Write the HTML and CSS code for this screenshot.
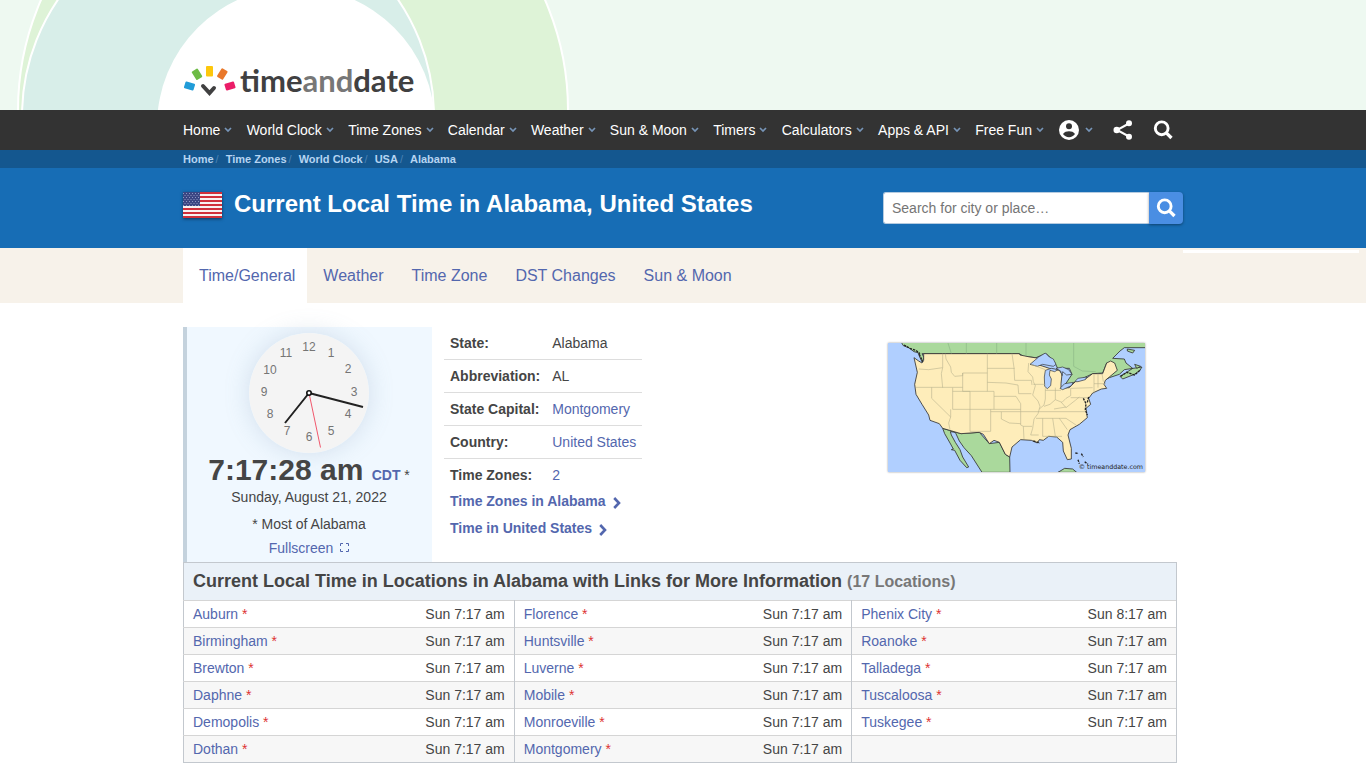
FILE: index.html
```html
<!DOCTYPE html>
<html lang="en">
<head>
<meta charset="utf-8">
<meta name="viewport" content="width=device-width, initial-scale=1">
<title>Current Local Time in Alabama, United States</title>
<link rel="stylesheet" href="styles.css">
</head>
<body>
<svg width="0" height="0" class="defs" aria-hidden="true">
  <symbol id="chev" viewBox="0 0 8 6"><path d="M1 1l3 3 3-3" fill="none" stroke="currentColor" stroke-width="1.7"/></symbol>
  <symbol id="search" viewBox="0 0 20 20"><circle cx="8.700" cy="8.300" r="6.400" fill="none" stroke="currentColor" stroke-width="2.900"/><path d="M12.800 12.400l5.700 5.600" fill="none" stroke="currentColor" stroke-width="3.300"/></symbol>
  <symbol id="arrow" viewBox="0 0 8 12"><path d="M1.2 1l4.800 5-4.800 5" fill="none" stroke="currentColor" stroke-width="2.600"/></symbol>
</svg>

<header class="banner">
  <svg class="banner-art" width="600" height="110" viewBox="0 0 600 110" aria-hidden="true">
    <circle cx="293" cy="110" r="275" fill="#def3d7" stroke="#fff" stroke-width="2"/>
    <circle cx="228" cy="116" r="206" fill="#d8eee9" stroke="#fff" stroke-width="2"/>
    <circle cx="296" cy="126" r="139" fill="#fff"/>
  </svg>
  <div class="wrap">
    <a class="logo" href="#" aria-label="timeanddate">
      <svg width="54" height="34" viewBox="0 0 54 34" aria-hidden="true">
        <rect x="-5" y="-3.500" width="10" height="7" rx="1" fill="#219cd8" transform="translate(6.500 20) rotate(17)"/>
        <rect x="-3.500" y="-5" width="7" height="10" rx="1" fill="#6dbb45" transform="translate(14 8.300) rotate(-32)"/>
        <rect x="23" y="0" width="7" height="10.500" rx="1" fill="#fdc70c"/>
        <rect x="-3.500" y="-5" width="7" height="10" rx="1" fill="#e9782a" transform="translate(39.300 8) rotate(32)"/>
        <rect x="-5" y="-3.500" width="10" height="7" rx="1" fill="#eb1d68" transform="translate(47 20) rotate(-17)"/>
        <path d="M20 20l6.500 7 4.500-5" fill="none" stroke="#404041" stroke-width="4" stroke-linecap="round"/>
      </svg>
      <span class="logo-text">time<span>and</span>date</span>
    </a>
  </div>
</header>

<nav class="nav" aria-label="Main">
  <div class="wrap nav-row">
    <a href="#">Home<svg><use href="#chev"/></svg></a>
    <a href="#">World Clock<svg><use href="#chev"/></svg></a>
    <a href="#">Time Zones<svg><use href="#chev"/></svg></a>
    <a href="#">Calendar<svg><use href="#chev"/></svg></a>
    <a href="#">Weather<svg><use href="#chev"/></svg></a>
    <a href="#">Sun &amp; Moon<svg><use href="#chev"/></svg></a>
    <a href="#">Timers<svg><use href="#chev"/></svg></a>
    <a href="#">Calculators<svg><use href="#chev"/></svg></a>
    <a href="#">Apps &amp; API<svg><use href="#chev"/></svg></a>
    <a href="#">Free Fun<svg><use href="#chev"/></svg></a>
    <button type="button" class="nav-btn account" aria-label="My account">
      <svg class="ico" viewBox="0 0 20 20"><circle cx="10" cy="10" r="10" fill="#fff"/><circle cx="10" cy="6.200" r="3" fill="#333"/><path d="M4 14.100c1.300-2.200 3.700-2.900 6-2.900s4.700.7 6 2.900c-1.300 1.900-3.500 3.200-6 3.200s-4.700-1.300-6-3.200z" fill="#333"/></svg>
      <svg class="chev"><use href="#chev"/></svg>
    </button>
    <button type="button" class="nav-btn share" aria-label="Share">
      <svg class="ico" viewBox="0 0 20 20"><path d="M16 3.500L4 10l12 6.500" fill="none" stroke="#fff" stroke-width="2"/><circle cx="16" cy="3.200" r="3" fill="#fff"/><circle cx="3.700" cy="10" r="3.200" fill="#fff"/><circle cx="16" cy="16.800" r="3" fill="#fff"/></svg>
    </button>
    <button type="button" class="nav-btn" aria-label="Search"><svg class="ico"><use href="#search"/></svg></button>
  </div>
</nav>

<nav class="crumbs" aria-label="Breadcrumb">
  <ol class="wrap">
    <li><a href="#">Home</a></li>
    <li><a href="#">Time Zones</a></li>
    <li><a href="#">World Clock</a></li>
    <li><a href="#">USA</a></li>
    <li><a href="#">Alabama</a></li>
  </ol>
</nav>

<section class="hero">
  <div class="wrap hero-row">
    <svg class="flag" viewBox="0 0 39 26" role="img" aria-label="United States flag">
      <defs><pattern id="stars" width="3" height="4" patternUnits="userSpaceOnUse"><rect width="3" height="4" fill="#3b4683"/><rect x="0" y="1" width="1" height="1" fill="#8d96c0"/><rect x="1.500" y="3" width="1" height="1" fill="#8d96c0"/></pattern></defs>
      <rect width="39" height="26" fill="#f7f1f1"/>
      <path d="M0 1h39M0 5h39M0 9h39M0 13h39M0 17h39M0 21h39M0 25h39" stroke="#cf2f3a" stroke-width="2"/>
      <rect width="17" height="14" fill="url(#stars)"/>
    </svg>
    <h1>Current Local Time in Alabama, United States</h1>
    <form class="search" role="search">
      <input type="text" aria-label="Search for city or place" placeholder="Search for city or place…">
      <button type="button" aria-label="Search"><svg><use href="#search"/></svg></button>
    </form>
  </div>
</section>

<nav class="tabs" aria-label="Sections">
  <div class="tab-row">
    <a class="on" href="#">Time/General</a>
    <a href="#">Weather</a>
    <a href="#">Time Zone</a>
    <a href="#">DST Changes</a>
    <a href="#">Sun &amp; Moon</a>
  </div>
  <div class="side"></div>
</nav>

<main class="wrap">
  <div class="overview">
    <section class="panel">
      <svg class="clock" viewBox="0 0 120 120" role="img" aria-label="Clock">
        <circle cx="60" cy="60" r="60" fill="#f4f4f4"/>
        <g class="nums">
          <text x="60" y="18">12</text><text x="82" y="24">1</text><text x="99" y="40">2</text><text x="105" y="63">3</text>
          <text x="99" y="85">4</text><text x="82" y="102">5</text><text x="60" y="108">6</text><text x="38" y="102">7</text>
          <text x="21" y="85">8</text><text x="15" y="63">9</text><text x="21" y="41">10</text><text x="37" y="24">11</text>
        </g>
        <path d="M60 60L36 90M60 60l54 14" stroke="#222" stroke-width="2"/>
        <path d="M60 60l11.500 54.500" stroke="#f0576c" stroke-width="1"/>
        <circle cx="60" cy="60" r="2.200" fill="#fff" stroke="#111" stroke-width="1.600"/>
      </svg>
      <div class="time">7:17:28 am <span class="zone"><a href="#">CDT</a> *</span></div>
      <div class="line">Sunday, August 21, 2022</div>
      <div class="line most">* Most of Alabama</div>
      <div class="line full"><a href="#">Fullscreen <svg viewBox="0 0 9 9"><path d="M.5 3V.5H3M6 .5h2.500V3M8.500 6v2.500H6M3 8.500H.5V6" fill="none" stroke="currentColor"/></svg></a></div>
    </section>

    <section class="facts">
      <table>
        <tr><th scope="row">State:</th><td>Alabama</td></tr>
        <tr><th scope="row">Abbreviation:</th><td>AL</td></tr>
        <tr><th scope="row">State Capital:</th><td><a href="#">Montgomery</a></td></tr>
        <tr><th scope="row">Country:</th><td><a href="#">United States</a></td></tr>
        <tr><th scope="row">Time Zones:</th><td><a href="#">2</a></td></tr>
      </table>
      <a class="more" href="#">Time Zones in Alabama<svg><use href="#arrow"/></svg></a>
      <a class="more" href="#">Time in United States<svg><use href="#arrow"/></svg></a>
    </section>

    <a class="map" href="#">
      <svg viewBox="26 24 771 387" role="img" aria-label="Map of United States">
        <rect x="26" y="24" width="771" height="387" fill="#b0cfff"/>
        <g stroke="#333" stroke-width="2.500" stroke-linejoin="round">
          <path d="M66 22L72 32 88 38 104 50 116 53 121 66 128 80 134 68 128 56H420L432 64 470 68 500 55 525 80 535 100H570L578 118 550 160 590 140 640 116 670 114 682 84 712 106 684 125 670 138 690 128 720 118 735 104 788 96 780 108 765 118 730 132 722 124 742 112 760 100 740 84 735 72 700 70 722 48 735 38H800V20z" fill="#aad99c"/>
          <path d="M744 42l22 4-6 8-16-6zM766 88l18 6-12 6z" fill="#aad99c"/>
          <path d="M190 280L196 296 212 324 222 342 216 344 226 346 242 376 262 398 268 396 250 366 242 344 228 322 216 300 213 290 228 292 240 318 254 338 276 362 308 412H392L391 366 378 358 360 322 330 326 300 292 245 296z" fill="#aad99c"/>
          <path d="M104 68L118 78 128 84 133 76V56H420L422 60 452 66 480 70 456 86 480 90 510 100 540 106 548 118 545 146 545 160 570 158 590 138 618 132 640 116 670 116 682 84 694 78 706 84 714 106 690 126 678 136 674 148 682 160 666 162 640 174 628 190 634 208 620 220 624 248 600 268 572 284 566 300 576 340 576 372 564 374 552 348 550 322 532 306 508 304 492 316 480 314 474 324 456 316 424 314 398 336 391 366 378 358 360 322 344 316 330 326 312 298 300 292 245 296 190 280 180 266 152 256 148 240 128 208 122 198 110 178 106 148 114 112z" fill="#feedba"/>
          <path d="M536 412l20-12 24 2 12 10z" fill="#aad99c"/>
        </g>
        <g fill="#b0cfff" stroke="#333" stroke-width="2">
          <path d="M452 88L478 66 498 54 510 66 522 72 530 88 522 94 490 88 474 94z"/>
          <path d="M498 106L516 100 536 104 526 110 512 106 510 120 516 132 514 152 504 161 496 154 495 126z"/>
          <path d="M530 100l20-4 18 8 10 14-16 2-12-10-2 12-4-14z"/>
          <path d="M542 160l14-14 26-4-6 10-26 12zM586 140l10-10 26-4-4 8-22 6z"/>
        </g>
        <g fill="none" stroke="#b5b08c" stroke-width="1.700">
          <path d="M118 102L148 104 190 98M190 56V98L186 116 190 158M110 157H250M198 56L200 72 214 96 216 112 226 124 250 122V114M250 114H324M250 114V169H344M324 56V169M324 100H406M324 142L380 144 416 150M398 56L404 98 406 136H456M344 169V184H410M220 158V223M157 157V190L214 246M344 184V223M272 169V289M220 169H272M220 223H424M214 223V246L208 264 212 284M334 223V289H272M334 230H366V252L390 264 424 266M366 230H424M416 150L418 176H456M410 184L424 206V270L432 274 434 312M424 230H476M456 136L458 150M448 84L446 110 460 126 462 140 468 152 460 180 476 198 482 214 476 236 464 252 460 280 454 300M462 148H498M498 160V192L494 210 480 222M528 158V194L512 208 494 214M498 166H545M528 194L548 202 560 190 574 182V160M574 188H628M574 160L640 158M546 202L560 218 588 196 600 186M476 230H624M470 250H560M490 250V304M520 250L528 304M490 304H548M540 250L564 284M560 250L590 270M524 222L560 216M432 274H458M454 300H478M644 118V176M656 116V158M644 146H680M668 116L672 140M456 88L498 104"/>
          <path d="M206 24l10 32M261 24v32M352 24v32M440 24v38M583 24v70l26 14 40 2" stroke="#86b183"/>
        </g>
        <g stroke="#222" stroke-width="4" fill="none" stroke-dasharray="7 3"><path d="M74 30l18 10 18 6 12 10M120 58l10 22M612 190l8 16-2 18 6 16M628 186l-4 16M462 318l20 6M588 354l10 2M606 356l6 10M616 380l10 8M596 374l4 12M724 124l18-12 24 8 18-16"/></g>
        <text x="598" y="403" class="credit">© timeanddate.com</text>
      </svg>
    </a>
  </div>

  <table class="cities">
    <colgroup><col class="c1"><col class="t1"><col class="c2"><col class="t2"><col class="c3"><col class="t3"></colgroup>
    <thead><tr><th colspan="6">Current Local Time in Locations in Alabama with Links for More Information <span>(17 Locations)</span></th></tr></thead>
    <tbody>
      <tr><td><a href="#">Auburn</a> <i>*</i></td><td>Sun 7:17 am</td><td><a href="#">Florence</a> <i>*</i></td><td>Sun 7:17 am</td><td><a href="#">Phenix City</a> <i>*</i></td><td>Sun 8:17 am</td></tr>
      <tr><td><a href="#">Birmingham</a> <i>*</i></td><td>Sun 7:17 am</td><td><a href="#">Huntsville</a> <i>*</i></td><td>Sun 7:17 am</td><td><a href="#">Roanoke</a> <i>*</i></td><td>Sun 7:17 am</td></tr>
      <tr><td><a href="#">Brewton</a> <i>*</i></td><td>Sun 7:17 am</td><td><a href="#">Luverne</a> <i>*</i></td><td>Sun 7:17 am</td><td><a href="#">Talladega</a> <i>*</i></td><td>Sun 7:17 am</td></tr>
      <tr><td><a href="#">Daphne</a> <i>*</i></td><td>Sun 7:17 am</td><td><a href="#">Mobile</a> <i>*</i></td><td>Sun 7:17 am</td><td><a href="#">Tuscaloosa</a> <i>*</i></td><td>Sun 7:17 am</td></tr>
      <tr><td><a href="#">Demopolis</a> <i>*</i></td><td>Sun 7:17 am</td><td><a href="#">Monroeville</a> <i>*</i></td><td>Sun 7:17 am</td><td><a href="#">Tuskegee</a> <i>*</i></td><td>Sun 7:17 am</td></tr>
      <tr><td><a href="#">Dothan</a> <i>*</i></td><td>Sun 7:17 am</td><td><a href="#">Montgomery</a> <i>*</i></td><td>Sun 7:17 am</td><td></td><td></td></tr>
    </tbody>
  </table>
</main>
</body>
</html>
```
FILE: styles.css
```css
* { box-sizing: border-box; }
body { margin: 0; background: #fff; color: #454545; font: 14px/20px "Liberation Sans", Arial, sans-serif; }
a { color: #5367ae; text-decoration: none; }
button { border: 0; padding: 0; background: none; cursor: pointer; }
svg { flex: none; }
.defs { display: block; height: 0; }
.wrap { max-width: 1000px; margin: 0 auto; }

.banner { position: relative; height: 110px; background: #eef9f1; overflow: hidden; }
.banner-art { position: absolute; left: 0; top: 0; }
.banner .wrap { position: relative; padding-top: 63px; }
.logo { display: flex; gap: 3px; }
.logo svg { overflow: visible; margin-top: 3px; }
.logo-text { font: bold 31px/34px Lato, sans-serif; color: #404041; }
.logo-text span { color: #777; }

.nav { background: #333; }
.nav-row { display: flex; align-items: center; justify-content: space-between; height: 40px; padding-right: 10px; white-space: nowrap; }
.nav a { display: flex; align-items: center; gap: 4px; padding-right: 14px; color: #fff; }
.nav a svg, .nav .chev { width: 8px; height: 6px; color: #7795b8; }
.nav-btn { display: flex; align-items: center; gap: 6px; }
.nav-btn .ico { width: 20px; height: 20px; color: #fff; }
.account { margin: 0 19px 0 1px; }
.share { margin-right: 20px; }

.crumbs { background: #14578f; font: bold 11px/18px "Liberation Sans", Arial, sans-serif; }
.crumbs ol { display: flex; padding: 0; list-style: none; }
.crumbs a { color: #b5d4f2; }
.crumbs li + li::before { content: "/"; padding: 0 7px 0 2px; font-weight: normal; color: #4a82b5; }

.hero { background: #176db5; }
.hero-row { display: flex; align-items: flex-start; height: 80px; padding-top: 24px; }
.flag { width: 39px; height: 26px; margin-right: 12px; box-shadow: 0 1px 3px rgba(0,0,0,.5); }
h1 { flex: 1; margin: 0; font-size: 24px; line-height: 24px; color: #fff; }
.search { display: flex; width: 300px; height: 32px; }
.search input { flex: 1; min-width: 0; border: 1px solid #b5cbe0; border-right: 0; border-radius: 3px 0 0 3px; padding: 0 8px; font: 14px "Liberation Sans", Arial, sans-serif; }
.search input::placeholder { color: #757575; }
.search button { display: grid; place-items: center; width: 34px; border-radius: 0 4px 4px 0; background: #4a8ee3; color: #fff; box-shadow: 0 1px 3px rgba(0,0,0,.4); }
.search svg { width: 20px; height: 20px; }

.tabs { display: grid; grid-template-columns: 1fr minmax(0, 1000px) 1fr; background: #f7f2ea; }
.tab-row { grid-column: 2; display: flex; font-size: 16px; line-height: 55px; }
.tab-row a { padding: 0 12px 0 16px; }
.tab-row .on { background: #fff; }
.side { height: 3px; margin: 2px 7px 0 0; background: #fff; }

main { padding: 24px 6px 0 0; }
.overview { display: flex; align-items: flex-start; }
.panel { width: 249px; padding: 6px 1px 4px 0; border-left: 4px solid #c4d2dd; background: #f0f8ff; text-align: center; }
.clock { display: block; width: 120px; height: 120px; margin: 0 auto; border-radius: 50%; box-shadow: 0 0 24px rgba(120,150,180,.25); }
.nums { font: 12px "Liberation Sans", Arial, sans-serif; fill: #757575; text-anchor: middle; }
.time { font-size: 30px; font-weight: bold; line-height: 34px; }
.zone { font-size: 14px; font-weight: normal; line-height: 14px; }
.zone a { font-weight: bold; }
.most { margin-top: 7px; }
.full { margin-top: 4px; }
.full svg { width: 9px; height: 9px; margin-left: 3px; vertical-align: 1px; }

.facts { width: 198px; margin-left: 12px; }
.facts table { width: 100%; border-collapse: collapse; line-height: 16px; white-space: nowrap; }
.facts th, .facts td { padding: 8px 6px; border-bottom: 1px solid #ddd; text-align: left; }
.facts tr:last-child > * { padding-bottom: 5px; border: 0; }
.more { display: flex; align-items: center; gap: 7px; padding-left: 6px; font-weight: bold; line-height: 27px; }
.more svg { width: 8px; height: 12px; margin-top: 2px; }
.map { margin: 16px 32px 0 auto; box-shadow: 0 0 2px rgba(0,0,0,.4); }
.map svg { display: block; width: 257px; height: 129px; }
.credit { font: 19px "DejaVu Sans", sans-serif; fill: #222; }

.cities { width: 100%; table-layout: fixed; border-collapse: collapse; border: 1px solid #c3c8ce; }
.cities th { padding: 0 9px; background: #eaf1f8; font-size: 18px; line-height: 37px; text-align: left; }
.cities th span { font-size: 16px; color: #777; }
.cities td { height: 27px; padding: 0 9px; line-height: 26px; border-top: 1px solid #d5d5d5; }
.cities td:nth-child(even) { text-align: right; border-right: 1px solid #c3c8ce; }
.cities tbody tr:nth-child(even) { background: #f7f7f7; }
.cities i { font-style: normal; color: #d33; }
.c1, .c3 { width: 18%; }
.t1, .t2 { width: 152px; }
.t3 { width: 146px; }
```
